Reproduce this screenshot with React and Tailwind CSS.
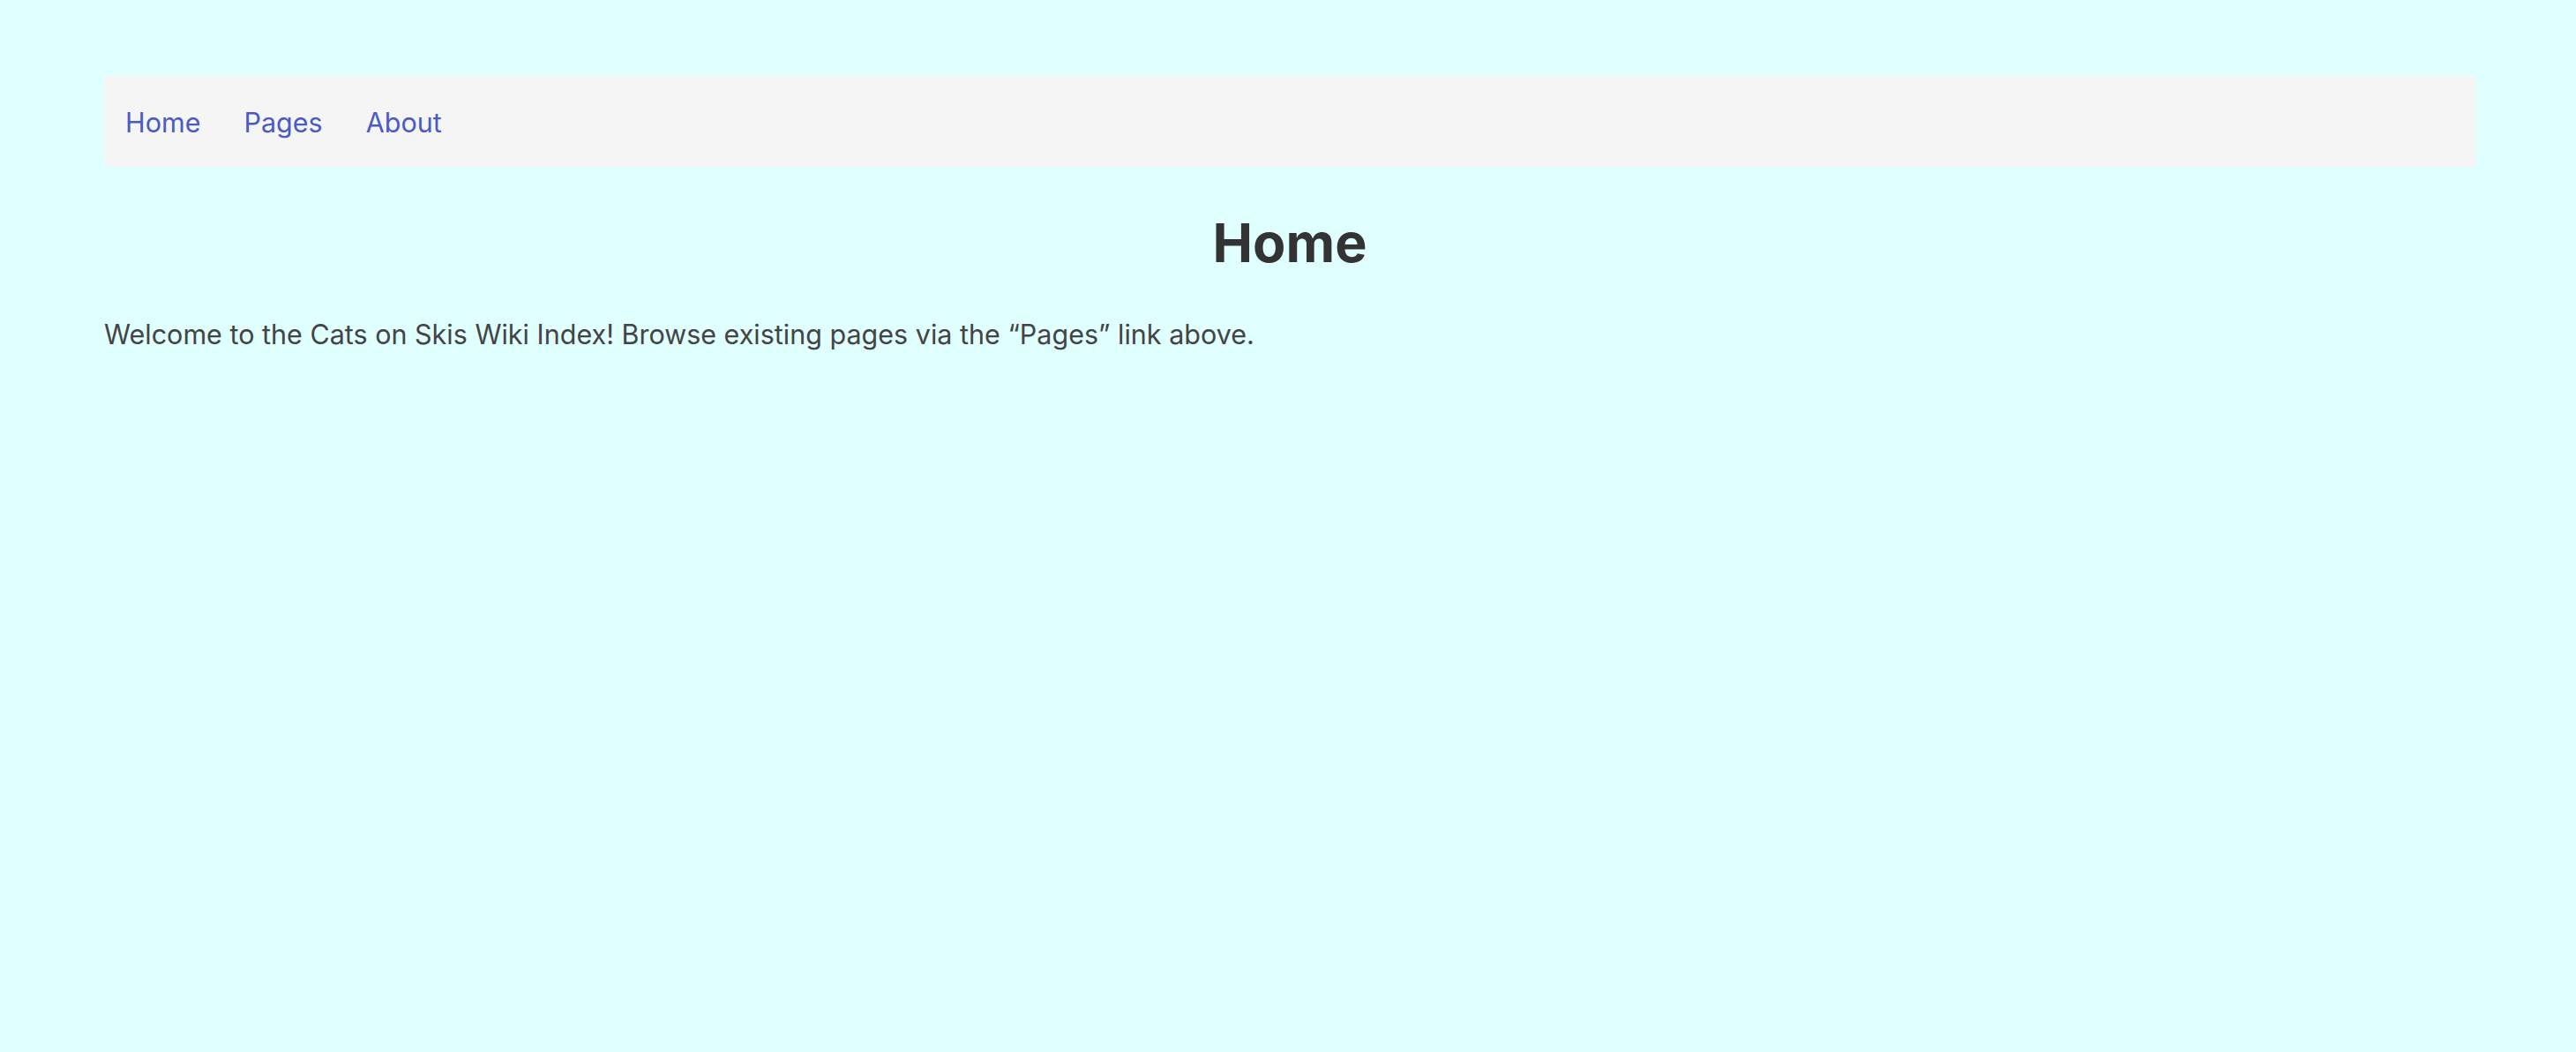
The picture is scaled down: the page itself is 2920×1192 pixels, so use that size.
export default function App() {
  return (
    <div className="min-h-screen bg-[#e0ffff] font-['Inter',sans-serif] pt-[86px]">
      <div className="ml-[118px] w-[2688px]">
        <nav className="flex items-center h-[103px] bg-[#f5f5f5] pl-[24px] pt-[3px] gap-[49px]">
          <a href="#" className="text-[30.5px] text-[#4a5bc4]">Home</a>
          <a href="#" className="text-[30.5px] text-[#4a5bc4]">Pages</a>
          <a href="#" className="text-[30.5px] text-[#4a5bc4]">About</a>
        </nav>
        <h1 className="text-center text-[61px] font-bold text-[#333333] mt-[48px] leading-tight">Home</h1>
        <p className="text-[30.5px] text-[#444444] mt-[43px]">
          Welcome to the Cats on Skis Wiki Index! Browse existing pages via the “Pages” link above.
        </p>
      </div>
    </div>
  );
}
